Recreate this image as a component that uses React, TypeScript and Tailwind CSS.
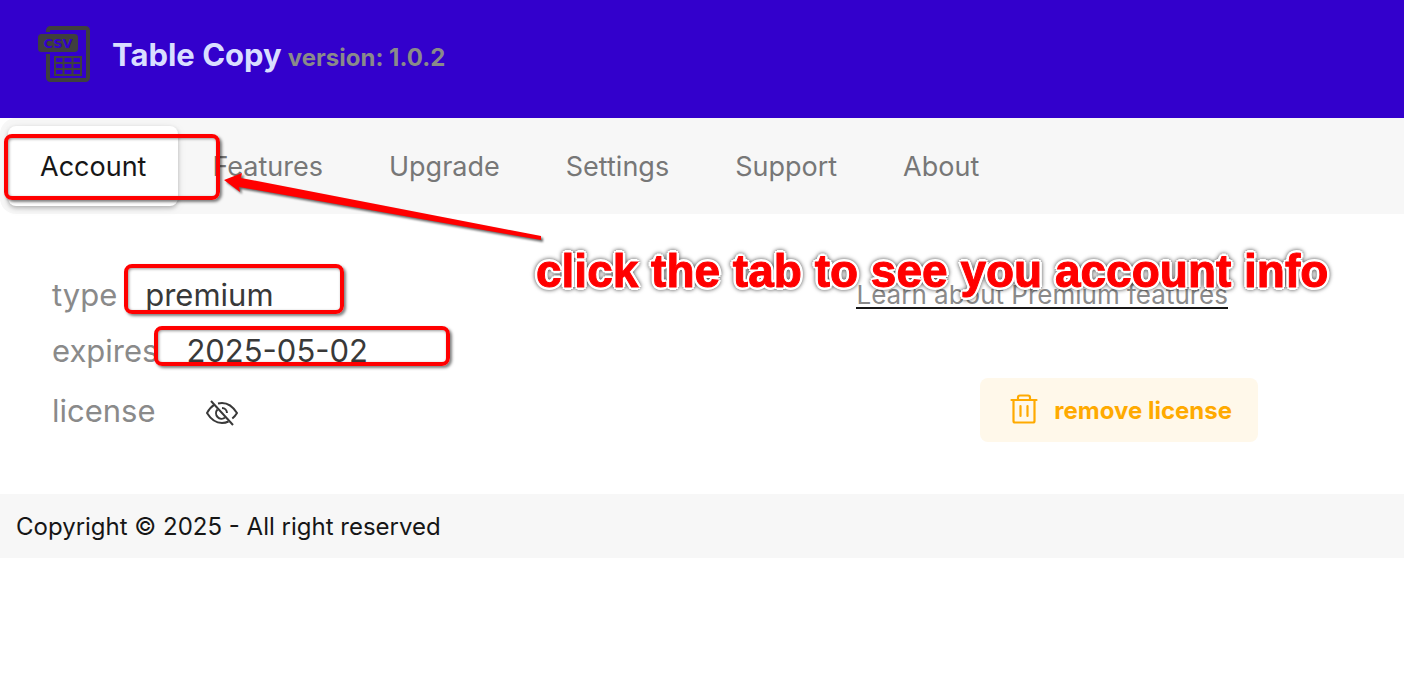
import { useState } from "react";

const tabs = ["Account", "Features", "Upgrade", "Settings", "Support", "About"];

function CsvLogo() {
    return (
        <svg width="54" height="58" viewBox="0 0 54 58" className="shrink-0" aria-hidden="true">
            <path
                d="M10 6V4.500a2.500 2.500 0 0 1 2.500-2.500h35a2.500 2.500 0 0 1 2.500 2.500v47a2.500 2.500 0 0 1-2.500 2.500h-35a2.500 2.500 0 0 1-2.500-2.500V28"
                fill="none"
                stroke="#3f3f3f"
                strokeWidth="4"
            />
            <rect x="0" y="8" width="40" height="18" rx="3.500" fill="#3f3f3f" />
            <text
                x="20"
                y="22"
                textAnchor="middle"
                fill="#3300cc"
                fontSize="13"
                fontWeight="700"
                fontFamily="'DejaVu Sans', sans-serif"
            >
                CSV
            </text>
            <path
                d="M17 31h26v18H17zM17 37h26M17 43h26M25.500 31v18M34.500 31v18"
                fill="none"
                stroke="#3f3f3f"
                strokeWidth="2"
            />
        </svg>
    );
}

function EyeOffIcon() {
    return (
        <svg
            width="32"
            height="26"
            viewBox="0 0 32 26"
            fill="none"
            stroke="currentColor"
            strokeWidth="2"
            aria-hidden="true"
        >
            <path d="M12 3.500Q14 3 16 3c6.500 0 11.500 4.500 15 10-1.300 2.200-2.800 4-4.700 5.500M8.500 4.700C5.500 6.500 3 9.500 1 13c3.500 5.700 8.500 10 15 10 2.300 0 4.500-.5 6.500-1.500" />
            <path d="M16 8a5.200 5.200 0 0 1 5 5M11.500 9.500a5.500 5.500 0 0 0 7.500 8" />
            <path d="M5 1l22 24" />
        </svg>
    );
}

function TrashIcon() {
    return (
        <svg
            width="28"
            height="30"
            viewBox="0 0 28 30"
            fill="none"
            stroke="currentColor"
            strokeWidth="2.2"
            strokeLinecap="round"
            strokeLinejoin="round"
            className="mb-0.5"
            aria-hidden="true"
        >
            <path d="M1.500 6h25M3.500 6v21a1.500 1.500 0 0 0 1.500 1.500h18a1.500 1.500 0 0 0 1.500-1.500V6M8 6V3.500a2 2 0 0 1 2-2h8a2 2 0 0 1 2 2V6M10.500 12v10M17.500 12v10" />
        </svg>
    );
}

function Header() {
    return (
        <header className="flex items-center gap-5 bg-[#3300cc] px-[38px] pt-[26px] pb-[34px]">
            <CsvLogo />
            <h1 className="flex items-baseline gap-1.5 pt-0.5 font-bold">
                <span className="text-[31px] leading-8 text-[#d9deff]">Table Copy</span>
                <span className="text-2xl leading-8 text-[#8a8a8a]">version: 1.0.2</span>
            </h1>
        </header>
    );
}

function Annotations() {
    const box = "absolute rounded-lg border-4 border-[#ff0000] shadow-[2px_2px_3px_rgba(0,0,0,0.5),inset_1px_1px_3px_rgba(0,0,0,0.4)]";

    return (
        <div className="pointer-events-none absolute inset-0">
            <div className={`${box} top-[134px] left-1 h-[66px] w-[216px]`} />
            <div className={`${box} top-[264px] left-[124px] h-[50px] w-[220px]`} />
            <div className={`${box} top-[326px] left-[154px] h-10 w-[296px]`} />
            <svg
                width="324"
                height="76"
                viewBox="0 0 324 76"
                className="absolute top-[170px] left-[222px] drop-shadow-[2px_2px_1px_rgba(0,0,0,0.6)]"
                aria-hidden="true"
            >
                <path d="M2 10 20 3 19 8 319 66 319 70 17 17 18 22Z" fill="#ff0000" />
            </svg>
            <p className="absolute top-[244px] left-[536px] font-['Liberation_Sans',sans-serif] text-[46px] leading-[54px] font-bold whitespace-nowrap text-[#ff0000] drop-shadow-[0_0_2px_rgba(0,0,0,0.7)] [-webkit-text-stroke:1px_#ff0000] [text-shadow:3px_0_white,-3px_0_white,0_3px_white,0_-3px_white,2px_2px_white,-2px_2px_white,2px_-2px_white,-2px_-2px_white]">
                click the tab to see you account info
            </p>
        </div>
    );
}

export default function App() {
    const [active, setActive] = useState("Account");
    const [showLicense, setShowLicense] = useState(false);

    return (
        <div className="relative min-h-screen bg-white font-['Inter',sans-serif]">
            <Header />

            <nav role="tablist" className="flex gap-0.5 rounded-l-2xl bg-[#f7f7f7] p-2">
                {tabs.map((tab) => (
                    <button
                        key={tab}
                        type="button"
                        role="tab"
                        aria-selected={tab === active}
                        onClick={() => setActive(tab)}
                        className={`h-20 rounded-lg px-8 pt-0.5 text-[27px] ${
                            tab === active
                                ? "bg-white text-[#161616] shadow-[0_2px_4px_rgba(0,0,0,0.25),0_2px_12px_rgba(0,0,0,0.06)]"
                                : "text-[#777777]"
                        }`}
                    >
                        {tab}
                    </button>
                ))}
            </nav>

            <main className="py-[52px] pr-[146px] pl-[52px] text-[31px] text-[#8a8a8a]">
                <div className="flex h-14 items-center justify-between pt-0.5">
                    <div className="flex gap-7">
                        <span>type</span>
                        <span className="text-[#393939]">premium</span>
                    </div>
                    <a
                        href="#premium"
                        className="mr-[30px] border-b-2 border-[#161616] pt-0.5 text-[26px] leading-6"
                    >
                        Learn about Premium features
                    </a>
                </div>
                <div className="flex h-14 items-center gap-7 pt-0.5">
                    <span>expires</span>
                    <span className="text-[#393939]">2025-05-02</span>
                </div>
                <div className="flex h-16 items-center justify-between">
                    <div className="flex items-center gap-[50px] pt-0.5">
                        <span>license</span>
                        <button
                            type="button"
                            aria-label="Show license"
                            aria-pressed={showLicense}
                            onClick={() => setShowLicense(!showLicense)}
                            className="pt-1 text-[#393939]"
                        >
                            <EyeOffIcon />
                        </button>
                    </div>
                    <button
                        type="button"
                        className="flex h-16 items-center gap-4 rounded-lg bg-[#fff8ea] pr-[26px] pl-[30px] text-2xl font-bold text-[#ffaa00]"
                    >
                        <TrashIcon />
                        <span className="pt-0.5">remove license</span>
                    </button>
                </div>
            </main>

            <footer className="bg-[#f7f7f7] px-4 pt-[17px] pb-[15px] text-2xl text-[#161616]">
                <p>Copyright © 2025 - All right reserved</p>
            </footer>

            <Annotations />
        </div>
    );
}
